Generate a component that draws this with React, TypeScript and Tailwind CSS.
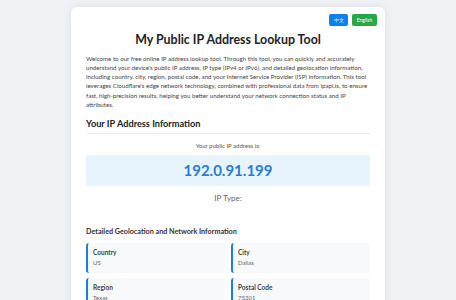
import React from "react";

const items = [
  { label: "Country", value: "US" },
  { label: "City", value: "Dallas" },
  { label: "Region", value: "Texas" },
  { label: "Postal Code", value: "75201" },
  { label: "ISP", value: "Cloudflare, Inc." },
  { label: "Timezone", value: "America/Chicago" },
];

export default function App() {
  return (
    <div
      className="w-[456px] h-[300px] overflow-hidden bg-[#f0f2f5] pt-[7px]"
      style={{ fontFamily: 'Lato, "Liberation Sans", sans-serif' }}
    >
      <div className="ml-[71px] w-[314px] bg-white rounded-[6px] shadow-[0_0_10px_rgba(0,0,0,0.08)] pt-[7px] px-[15px] pb-[20px]">
        <div className="flex justify-end gap-[4px] -mr-[7px]">
          <button className="h-[12px] w-[19px] rounded-[2px] bg-[#0d7ff0] text-white text-[5px] leading-[12px]">
            中文
          </button>
          <button className="h-[12px] w-[25px] rounded-[2px] bg-[#28a745] text-white text-[5px] leading-[12px]">
            English
          </button>
        </div>
        <h1 className="mt-[3.5px] text-center text-[12.4px] leading-[20px] font-bold text-[#222]">
          My Public IP Address Lookup Tool
        </h1>
        <p className="mt-[4px] text-[6.15px] leading-[9.3px] text-[#444]">
          Welcome to our free online IP address lookup tool. Through this tool, you can quickly and accurately
          understand your device's public IP address, IP type (IPv4 or IPv6), and detailed geolocation information,
          including country, city, region, postal code, and your Internet Service Provider (ISP) information. This tool
          leverages Cloudflare's edge network technology, combined with professional data from ipapi.is, to ensure
          fast, high-precision results, helping you better understand your network connection status and IP
          attributes.
        </p>
        <h2 className="mt-[8px] text-[9.2px] leading-[14px] font-bold text-[#222] pb-[2px] border-b border-[#eeeeee]">
          Your IP Address Information
        </h2>
        <div className="mt-[7px] text-center text-[6px] leading-[9px] text-[#555]">Your public IP address is:</div>
        <div className="mt-[4.5px] h-[31px] rounded-[3px] bg-[#e8f4fd] flex items-center justify-center text-[15px] font-bold text-[#1e7fd8]">
          192.0.91.199
        </div>
        <div className="mt-[7.5px] text-center text-[8px] leading-[11px] text-[#666]">IP Type:</div>
        <h3 className="mt-[22px] text-[7.2px] leading-[11px] font-bold text-[#333]">
          Detailed Geolocation and Network Information
        </h3>
        <div className="mt-[5.5px] grid grid-cols-2 gap-x-[6px] gap-y-[5px]">
          {items.map((it) => (
            <div key={it.label} className="h-[30px] rounded-[3px] bg-[#f7f9fb] border-l-2 border-[#1e7fd8] pl-[5px] pt-[5px]">
              <div className="text-[6.5px] leading-[9px] font-bold text-[#444]">{it.label}</div>
              <div className="mt-[1px] text-[6px] leading-[9px] text-[#666]">{it.value}</div>
            </div>
          ))}
        </div>
      </div>
    </div>
  );
}
